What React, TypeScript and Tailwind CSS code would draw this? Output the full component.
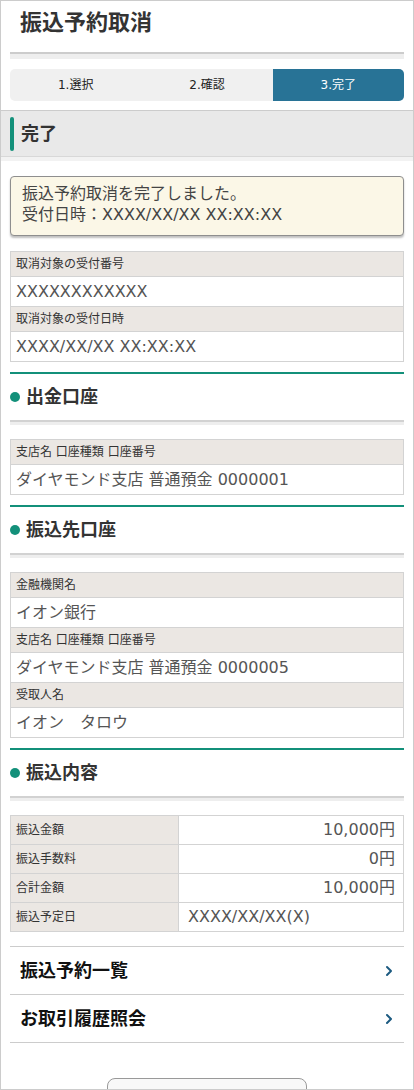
import { ChevronRight } from 'lucide-react';

const font = { fontFamily: '"DejaVu Sans", "Noto Sans CJK JP", "Noto Sans", sans-serif' };

function SectionHead({ title }: { title: string }) {
  return (
    <div className="mt-[10px]">
      <div className="h-[2px] bg-[#13907a]" />
      <div className="h-[46px] flex items-center gap-[6px]">
        <span className="w-[10px] h-[10px] rounded-full bg-[#13907a]" />
        <span className="text-[18px] font-bold text-[#333] leading-none">{title}</span>
      </div>
      <div className="h-[2px] bg-[#d2d2d2]" />
      <div className="h-[3px] bg-[#eeeeee]" />
    </div>
  );
}

function StackTable({ rows, first }: { rows: { label: string; value: string }[]; first?: boolean }) {
  return (
    <div className={(first ? 'mt-[15px]' : 'mt-[14px]') + ' border border-[#d3d3d3]'}>
      {rows.map((r, i) => {
        const last = i === rows.length - 1;
        return (
          <div key={i}>
            <div className="h-[25px] flex items-center px-[5px] bg-[#ebe7e3] border-b border-[#d3d3d3] text-[12px] text-[#333]">
              {r.label}
            </div>
            <div
              className={
                'flex items-center px-[5px] bg-white text-[16px] text-[#555] ' +
                (last ? 'h-[29px]' : 'h-[30px] border-b border-[#d3d3d3]')
              }
            >
              {r.value}
            </div>
          </div>
        );
      })}
    </div>
  );
}

const details = [
  { label: '振込金額', value: '10,000円', right: true },
  { label: '振込手数料', value: '0円', right: true },
  { label: '合計金額', value: '10,000円', right: true },
  { label: '振込予定日', value: 'XXXX/XX/XX(X)', right: false },
];

export default function App() {
  return (
    <div style={font} className="h-[1090px] overflow-hidden bg-white border border-[#cccccc] w-[414px]">
      <div className="px-[9px]">
        <h1 className="pt-[8px] pl-[10px] text-[22px] leading-[28px] font-bold text-[#333]">振込予約取消</h1>
        <div className="mt-[15px] h-[2px] bg-[#cccccc]" />
        <div className="h-[5px] bg-[#eeeeee]" />

        <div className="mt-[10px] h-[32px] grid grid-cols-3 rounded-[5px] overflow-hidden bg-[#f0f0f0] text-[12px]">
          <div className="flex items-center justify-center text-[#222]">1.選択</div>
          <div className="flex items-center justify-center text-[#222]">2.確認</div>
          <div className="flex items-center justify-center text-white bg-[#287396]">3.完了</div>
        </div>
      </div>

      <div className="mt-[9px] border-t border-[#cccccc]">
        <div className="h-[45px] bg-[#e9e9e9] flex items-center px-[9px] gap-[7px]">
          <span className="w-[4px] h-[34px] rounded-full bg-[#13907a]" />
          <span className="text-[18px] font-bold text-[#333] leading-none">完了</span>
        </div>
        <div className="h-[1px] bg-[#d8d8d8]" />
        <div className="h-[4px] bg-[#f2f2f2]" />
      </div>

      <div className="px-[9px]">
        <div className="mt-[15px] rounded-[4px] border border-[#8e8e8e] bg-[#fbf7e7] pl-[11px] pt-[6px] pb-[10px] shadow-[0_2px_2px_rgba(0,0,0,0.25)] text-[16px] leading-[21px] text-[#444]">
          <div>振込予約取消を完了しました。</div>
          <div>受付日時：XXXX/XX/XX XX:XX:XX</div>
        </div>

        <StackTable
          first
          rows={[
            { label: '取消対象の受付番号', value: 'XXXXXXXXXXXX' },
            { label: '取消対象の受付日時', value: 'XXXX/XX/XX XX:XX:XX' },
          ]}
        />

        <SectionHead title="出金口座" />
        <StackTable rows={[{ label: '支店名 口座種類 口座番号', value: 'ダイヤモンド支店 普通預金 0000001' }]} />

        <SectionHead title="振込先口座" />
        <StackTable
          rows={[
            { label: '金融機関名', value: 'イオン銀行' },
            { label: '支店名 口座種類 口座番号', value: 'ダイヤモンド支店 普通預金 0000005' },
            { label: '受取人名', value: 'イオン　タロウ' },
          ]}
        />

        <SectionHead title="振込内容" />
        <div className="mt-[14px] border border-[#d3d3d3]">
          {details.map((d, i) => {
            const last = i === details.length - 1;
            return (
              <div key={d.label} className={'flex ' + (last ? 'h-[28px]' : 'h-[29px] border-b border-[#d3d3d3]')}>
                <div className="w-[168px] shrink-0 bg-[#ebe7e3] border-r border-[#d3d3d3] flex items-center pl-[5px] text-[12px] text-[#333]">
                  {d.label}
                </div>
                <div
                  className={
                    'flex-1 flex items-center text-[16px] text-[#555] ' +
                    (d.right ? 'justify-end pr-[8px]' : 'pl-[9px]')
                  }
                >
                  {d.value}
                </div>
              </div>
            );
          })}
        </div>

        <div className="mt-[14px] border-t border-[#cccccc]">
          {['振込予約一覧', 'お取引履歴照会'].map((t) => (
            <div key={t} className="h-[48px] flex items-center justify-between pl-[10px] pr-[7px] border-b border-[#cccccc]">
              <span className="text-[18px] font-bold text-[#111]">{t}</span>
              <ChevronRight className="w-[16px] h-[16px] text-[#1c5a80]" strokeWidth={3} />
            </div>
          ))}
        </div>

        <div className="mt-[35px] mx-auto w-[200px] h-[40px] rounded-[8px] border border-[#999] bg-[#f8f8f8]" />
      </div>
    </div>
  );
}
